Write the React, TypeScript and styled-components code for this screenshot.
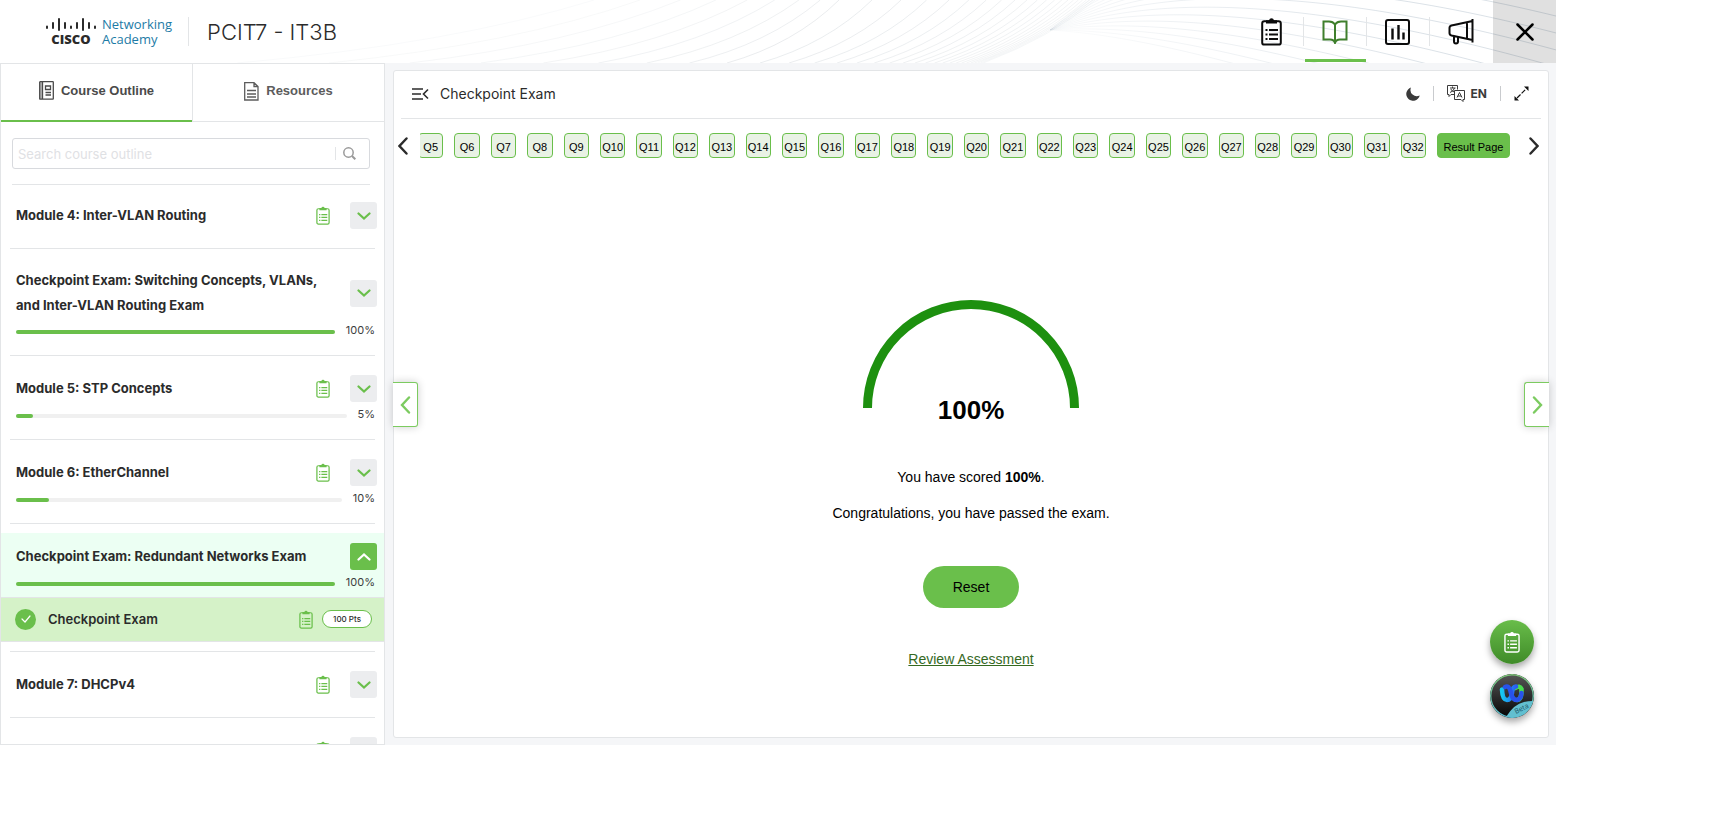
import React from 'react';
import styled, { createGlobalStyle, css } from 'styled-components';

const green = '#6abf4b';
const line = '#e3e5e7';

const GlobalStyle = createGlobalStyle`
  *, *::before, *::after { box-sizing: border-box; }
  body { margin: 0; background: #fff; color: #2b2b2b; font-family: Inter, "Liberation Sans", sans-serif; }
  button { font: inherit; color: inherit; border: 0; padding: 0; background: none; cursor: pointer; }
  h1, h2, h3, p, ul, ol { margin: 0; padding: 0; }
  ul, ol { list-style: none; }
  svg { display: block; flex: none; }
`;

const Page = styled.div`
  min-height: 100vh;
  padding: 0 172px 82px 0;
  display: flex;
`;
const Shell = styled.div`
  flex: 1;
  min-width: 0;
  height: calc(100vh - 82px);
  display: flex;
  flex-direction: column;
`;

/* ---------- header ---------- */
const Header = styled.header`
  position: relative;
  flex: none;
  height: 63px;
  display: flex;
  align-items: center;
  padding-left: 46px;
`;
const Waves = styled.svg`
  position: absolute;
  inset: 0;
  width: 100%;
  height: 100%;
  z-index: -1;
`;
const Brand = styled.a`
  display: flex;
  align-items: center;
  gap: 6px;
  padding-right: 16px;
  border-right: 1px solid ${line};
  height: 29px;
  text-decoration: none;
`;
const CiscoMark = styled.span`
  display: flex;
  flex-direction: column;
  align-items: center;
  gap: 2px;
  color: #2b2b2b;
  font: 800 13px/12px "Open Sans", sans-serif;
`;
const AcademyName = styled.span`
  color: #1d7ba6;
  font: 400 13px/15px "Open Sans", sans-serif;
`;
const CourseTitle = styled.h1`
  flex: 1;
  padding-left: 18px;
  font-size: 22px;
  line-height: 28px;
  font-weight: 300;
`;
const HeaderNav = styled.nav`
  display: flex;
  align-self: stretch;
`;
const NavButton = styled.button<{ $active?: boolean }>`
  position: relative;
  width: 63px;
  padding-right: 2px;
  display: grid;
  place-items: center;
  color: ${(p) => (p.$active ? '#3f7f2c' : '#0c0c0c')};
  background: linear-gradient(${line}, ${line}) right center / 1px 29px no-repeat;
  &:nth-last-child(2) { background: none; }
  ${(p) => p.$active && css`
    &::after { content: ''; position: absolute; inset: auto 1px 1px; height: 3px; background: ${green}; }
  `}
`;
const CloseButton = styled.button`
  width: 63px;
  display: grid;
  place-items: center;
  color: #000;
  background: rgba(0, 0, 0, 0.12);
`;

/* ---------- layout ---------- */
const Body = styled.div`
  flex: 1;
  min-height: 0;
  display: flex;
  background: #f5f6f8;
`;
const Sidebar = styled.aside`
  flex: none;
  width: 385px;
  display: flex;
  flex-direction: column;
  border: 1px solid ${line};
  background: #fff;
  overflow: hidden;
`;
const Tabs = styled.div`
  flex: none;
  display: flex;
  height: 58px;
`;
const Tab = styled.button<{ $active?: boolean }>`
  flex: 1;
  display: flex;
  align-items: center;
  justify-content: center;
  gap: 7px;
  padding-bottom: 3px;
  color: ${(p) => (p.$active ? '#4a4a4a' : '#5c5c5c')};
  font: 700 13px/20px "Liberation Sans", sans-serif;
  border-bottom: ${(p) => (p.$active ? `2px solid ${green}` : `1px solid ${line}`)};
  & + & { border-left: 1px solid ${line}; }
`;
const SearchArea = styled.div`
  flex: none;
  margin: 0 14px 0 11px;
  padding: 16px 0 15px;
  border-bottom: 1px solid ${line};
`;
const SearchBox = styled.label`
  display: flex;
  align-items: center;
  height: 31px;
  padding: 0 13px 0 5px;
  border: 1px solid #d8dade;
  border-radius: 3px;
`;
const SearchInput = styled.input`
  flex: 1;
  min-width: 0;
  border: 0;
  outline: 0;
  padding: 0;
  background: none;
  font: 400 13px/20px Inter, sans-serif;
  &::placeholder { color: #dfe1e4; opacity: 1; }
`;
const SearchButton = styled.button`
  padding-left: 7px;
  border-left: 1px solid ${line};
  color: #9a9a9a;
`;

/* ---------- outline ---------- */
const OutlineList = styled.ul`
  flex: 1;
  min-height: 0;
  overflow: hidden;
`;
const OutlineItem = styled.li`
  padding: 9px 0 10px;
  background: linear-gradient(${line}, ${line}) center bottom / calc(100% - 18px) 1px no-repeat;
  &:first-child { padding-top: 7px; }
`;
const ModuleCard = styled.div<{ $open?: boolean }>`
  padding: 10px 7px 0 15px;
  background: ${(p) => (p.$open ? '#ecfff3' : 'transparent')};
`;
const ModuleHead = styled.div<{ $plain?: boolean }>`
  display: flex;
  align-items: center;
  padding-bottom: ${(p) => (p.$plain ? '10px' : '0')};
`;
const ModuleTitle = styled.h3`
  flex: 1;
  padding-right: 16px;
  font-size: 13px;
  line-height: 25px;
  font-weight: 700;
`;
const TaskIcon = styled.span`
  margin-right: 20px;
  color: ${green};
`;
const Toggle = styled.button<{ $open?: boolean }>`
  flex: none;
  width: 27px;
  height: 27px;
  display: grid;
  place-items: center;
  border-radius: 3px;
  color: ${(p) => (p.$open ? '#fff' : green)};
  background: ${(p) => (p.$open ? green : '#ecedef')};
`;
const ProgressRow = styled.div<{ $open?: boolean }>`
  display: flex;
  align-items: center;
  gap: 11px;
  height: ${(p) => (p.$open ? '27px' : '28px')};
  padding-right: 2px;
  font-size: 11px;
  line-height: 24px;
  color: #3d3d3d;
  span { padding-bottom: 4px; }
`;
const Track = styled.div`
  flex: 1;
  height: 4px;
  border-radius: 2px;
  background: #f0f0f0;
`;
const Fill = styled.div`
  height: 4px;
  border-radius: 2px;
  background: ${green};
`;
const Lesson = styled.div`
  display: flex;
  align-items: center;
  height: 45px;
  padding: 0 12px 1px 14px;
  border: solid ${line};
  border-width: 1px 0;
  background: #d5f2c8;
`;
const Done = styled.span`
  width: 21px;
  height: 21px;
  display: grid;
  place-items: center;
  border-radius: 50%;
  color: #fff;
  background: ${green};
`;
const LessonTitle = styled.a`
  flex: 1;
  padding-left: 12px;
  font-size: 13px;
  line-height: 25px;
  font-weight: 600;
  color: inherit;
  text-decoration: none;
`;
const Points = styled.span`
  width: 50px;
  height: 18px;
  margin-left: 9px;
  border: 1px solid ${green};
  border-radius: 9px;
  background: #fff;
  font-size: 8px;
  line-height: 16px;
  font-weight: 500;
  text-align: center;
`;
const LessonIcon = styled.span`
  color: ${green};
`;

/* ---------- content ---------- */
const Main = styled.main`
  flex: 1;
  min-width: 0;
  padding: 7px 7px 7px 8px;
  display: flex;
`;
const Card = styled.section`
  position: relative;
  flex: 1;
  min-width: 0;
  display: flex;
  flex-direction: column;
  border: 1px solid ${line};
  border-radius: 3px;
  background: #fff;
`;
const CardHead = styled.div`
  display: flex;
  align-items: center;
  height: 48px;
  margin: 0 7px;
  padding: 0 12px 2px 11px;
  border-bottom: 1px solid ${line};
`;
const CardTitle = styled.h2`
  flex: 1;
  padding-left: 11px;
  font-size: 14px;
  line-height: 24px;
  font-weight: 400;
`;
const ToolGroup = styled.div`
  display: flex;
  align-items: center;
  height: 15px;
  & + & { margin-left: 13px; padding-left: 13px; border-left: 1px solid #c9cbce; }
`;
const ToolButton = styled.button`
  display: flex;
  align-items: center;
  gap: 6px;
  font: 700 12px/16px Inter, sans-serif;
  color: #3a3a3a;
`;
const QuestionBar = styled.div`
  display: flex;
  align-items: center;
  gap: 12px;
  margin: 14px 9px 0 4px;
`;
const Viewport = styled.div`
  flex: 1;
  min-width: 0;
  overflow: hidden;
  padding-right: 7px;
`;
const Questions = styled.ol`
  display: flex;
  gap: 11px;
  margin-left: -2px;
`;
const QuestionItem = styled.li<{ $result?: boolean }>`
  flex: ${(p) => (p.$result ? '0 0 73px' : '1 0 24px')};
`;
const QuestionButton = styled.button<{ $result?: boolean }>`
  width: 100%;
  height: 25px;
  padding-top: 2px;
  border: 1px solid ${green};
  border-radius: 4px;
  background: ${(p) => (p.$result ? green : '#e9f2e5')};
  color: #000;
  font: 400 11px/20px "Liberation Sans", sans-serif;
  white-space: nowrap;
`;
const Result = styled.div`
  display: flex;
  flex-direction: column;
  align-items: center;
  padding-top: 142px;
  font-family: "Liberation Sans", sans-serif;
  color: #000;
`;
const Gauge = styled.div`
  display: grid;
  justify-items: center;
  margin-bottom: 42px;
  & > * { grid-area: 1 / 1; }
`;
const Score = styled.strong`
  padding-top: 95px;
  font-size: 26px;
  line-height: 30px;
`;
const Message = styled.p`
  font-size: 14px;
  line-height: 20px;
  margin-bottom: 16px;
`;
const ResetButton = styled.button`
  width: 96px;
  height: 42px;
  margin: 27px 0 41px;
  border-radius: 21px;
  background: ${green};
  font-size: 14px;
`;
const ReviewLink = styled.a`
  color: #35691f;
  font-size: 14px;
  line-height: 20px;
`;
const PageTurn = styled.button<{ $side: 'left' | 'right' }>`
  position: absolute;
  top: 311px;
  ${(p) => p.$side}: -1px;
  width: 25px;
  height: 45px;
  display: grid;
  place-items: center;
  color: #7ccb60;
  background: #fff;
  border: 1px solid #7ccb60;
  border-${(p) => p.$side}: 0;
  border-radius: ${(p) => (p.$side === 'left' ? '0 3px 3px 0' : '3px 0 0 3px')};
  box-shadow: 0 0 8px rgba(0, 0, 0, 0.2);
`;
const Floating = styled.div`
  position: absolute;
  right: 14px;
  bottom: 19px;
  display: grid;
  gap: 10px;
`;
const FloatButton = styled.button<{ $dark?: boolean }>`
  width: 44px;
  height: 44px;
  display: grid;
  place-items: center;
  overflow: hidden;
  border-radius: 50%;
  color: #fff;
  background: ${(p) => (p.$dark ? '#222' : 'linear-gradient(#69bd4a, #3f8b28)')};
  box-shadow: 0 4px 7px rgba(0, 0, 0, 0.35);
`;

/* ---------- drawings ---------- */
const Clipboard = ({ w, h, s = 1.9 }: { w: number; h: number; s?: number }) => (
  <svg width={w} height={h} viewBox="0 0 21 29" fill="none" stroke="currentColor" strokeWidth={s}>
    <rect x="1.2" y="4.2" width="18.6" height="23.4" rx="2.2" />
    <path d="M5 3.2h3a2.6 2.6 0 0 1 5 0h3v3.3H5z" fill="currentColor" stroke="none" />
    <path d="M4.5 13h2M4.5 17.5h2M4.5 22h2M8 13h9M8 17.5h9M8 22h9" />
  </svg>
);
const Chevron = ({ d, w, h, s = 2 }: { d: string; w: number; h: number; s?: number }) => (
  <svg width={w} height={h} viewBox={`0 0 ${w} ${h}`} fill="none" stroke="currentColor" strokeWidth={s} strokeLinecap="round">
    <path d={d} />
  </svg>
);

/* Contour lines: one family bunches up toward x = 1000, the other fans out from there. */
const risingLines = Array.from({ length: 30 }, (_, i) => {
  const start = 1002 - 275 * Math.pow(0.88, i - 8);
  const reach = 112 + Math.max(0, 727 - start) * 0.5;
  return {
    d: `M${start} 63Q${start + reach * 0.6} ${44 - Math.max(0, i - 8) * 0.3} ${start + reach} 0`,
    opacity: i < 8 ? 0.04 + i * 0.012 : 0.15 - (i - 8) * 0.004,
  };
});
const fallingLines = Array.from({ length: 15 }, (_, i) => {
  const k = i - 9;
  return {
    d: `M1050 30C1130 ${10 + 5 * k} 1260 ${-5 + 13 * k} 1560 ${85 + 17 * k}`,
    opacity: 1 - Math.max(0, k) * 0.08,
  };
});

type Item = { title: string; task?: boolean; progress?: number; open?: boolean };
const items: Item[] = [
  { title: 'Module 4: Inter-VLAN Routing', task: true },
  { title: 'Checkpoint Exam: Switching Concepts, VLANs, and Inter-VLAN Routing Exam', progress: 100 },
  { title: 'Module 5: STP Concepts', task: true, progress: 5 },
  { title: 'Module 6: EtherChannel', task: true, progress: 10 },
  { title: 'Checkpoint Exam: Redundant Networks Exam', progress: 100, open: true },
  { title: 'Module 7: DHCPv4', task: true },
  { title: '', task: true },
];
const questions = Array.from({ length: 28 }, (_, i) => `Q${i + 5}`);

export default function App() {
  return (
    <Page>
      <GlobalStyle />
      <Shell>
        <Header>
          <Waves viewBox="0 0 1556 63" preserveAspectRatio="xMaxYMid slice" fill="none" aria-hidden="true">
            <defs>
              <linearGradient id="fan" gradientUnits="userSpaceOnUse" x1="1045" y1="0" x2="1400" y2="0">
                <stop stopColor="#8fa3b5" stopOpacity="0.04" />
                <stop offset="0.35" stopColor="#8fa3b5" stopOpacity="0.16" />
                <stop offset="1" stopColor="#8fa3b5" stopOpacity="0.32" />
              </linearGradient>
            </defs>
            {risingLines.map((l, i) => (
              <path key={i} d={l.d} stroke="#70808f" strokeOpacity={l.opacity} />
            ))}
            {fallingLines.map((l, i) => (
              <path key={i} d={l.d} stroke="url(#fan)" strokeOpacity={l.opacity} />
            ))}
          </Waves>
          <Brand href="#" aria-label="Cisco Networking Academy">
            <CiscoMark>
              <svg width="50" height="13" viewBox="0 0 50 13" stroke="currentColor" strokeWidth="2" strokeLinecap="round">
                <path d="M1 8.500v1.500M7 5v5M13 1v11M19 5v5M25 8.500v1.500M31 5v5M37 1v11M43 5v5M49 8.500v1.500" />
              </svg>
              CISCO
            </CiscoMark>
            <AcademyName>Networking<br />Academy</AcademyName>
          </Brand>
          <CourseTitle>PCIT7 - IT3B</CourseTitle>
          <HeaderNav aria-label="Course">
            <NavButton aria-label="Assignments"><Clipboard w={21} h={29} s={2} /></NavButton>
            <NavButton $active aria-label="Course content">
              <svg width="26" height="24" viewBox="0 0 26 24" fill="none" stroke="currentColor" strokeWidth="2">
                <path d="M13 4.500Q11 1.500 7 1.500H1.500V19.500H8Q12 19.500 13 23Q14 19.500 18 19.500H24.500V1.500H19Q15 1.500 13 4.500V22" />
              </svg>
            </NavButton>
            <NavButton aria-label="Grades">
              <svg width="25" height="26" viewBox="0 0 25 26" fill="none" stroke="currentColor" strokeWidth="2">
                <rect x="1" y="1" width="23" height="24" rx="2" />
                <path d="M7.500 9.500V20.500M13.500 6V20.500M18.500 13.500V20.500" strokeWidth="2.400" />
              </svg>
            </NavButton>
            <NavButton aria-label="Announcements">
              <svg width="26" height="27" viewBox="0 0 26 27" fill="none" stroke="currentColor" strokeWidth="2">
                <path d="M24.500 1V24.500M19 4V21M24.500 3L3.500 7.500Q1.500 8 1.500 10V15Q1.500 17 3.500 17.500L24.500 22M6 18V23.500Q6 25.500 8 25.500T10 23.500V19" />
              </svg>
            </NavButton>
            <CloseButton aria-label="Close"><Chevron w={18} h={18} d="M1.500 1.500L16.500 16.500M16.500 1.500L1.500 16.500" s={2.5} /></CloseButton>
          </HeaderNav>
        </Header>

        <Body>
          <Sidebar>
            <Tabs role="tablist">
              <Tab $active role="tab" aria-selected="true">
                <svg width="15" height="19" viewBox="0 0 15 19" fill="none" stroke="currentColor" strokeWidth="1.300">
                  <path d="M0.700 0.700H3.700V18.200H0.700z" fill="#bbb" stroke="none" />
                  <rect x="0.700" y="0.700" width="13.600" height="17.500" rx="0.500" />
                  <path d="M3.500 1V18M6.500 5H11.500V8.500H6.500zM6.500 11.500H12M6.500 14H12" />
                </svg>
                Course Outline
              </Tab>
              <Tab role="tab" aria-selected="false">
                <svg width="15" height="19" viewBox="0 0 15 19" fill="none" stroke="currentColor" strokeWidth="1.300">
                  <path d="M0.700 0.700H10L14 4.500V18H0.700zM10 0.700V4.500H14M3 8.500H12M3 12H12M3 15H12" />
                </svg>
                Resources
              </Tab>
            </Tabs>
            <SearchArea>
              <SearchBox>
                <SearchInput type="search" placeholder="Search course outline" aria-label="Search course outline" />
                <SearchButton aria-label="Search">
                  <svg width="13" height="13" viewBox="0 0 13 13" fill="none" stroke="currentColor" strokeWidth="1.500">
                    <circle cx="5.500" cy="5.500" r="4.700" /><path d="M9 9L12.300 12.300" strokeWidth="2" />
                  </svg>
                </SearchButton>
              </SearchBox>
            </SearchArea>
            <OutlineList>
              {items.map((it, i) => (
                <OutlineItem key={i}>
                  <ModuleCard $open={it.open}>
                    <ModuleHead $plain={it.progress === undefined}>
                      <ModuleTitle>{it.title}</ModuleTitle>
                      {it.task && <TaskIcon><Clipboard w={14} h={19} /></TaskIcon>}
                      <Toggle $open={it.open} aria-label={it.open ? 'Collapse' : 'Expand'} aria-expanded={!!it.open}>
                        <Chevron w={14} h={8} s={2.2} d={it.open ? 'M1.500 6.500L7 1.500L12.500 6.500' : 'M1.500 1.500L7 6.500L12.500 1.500'} />
                      </Toggle>
                    </ModuleHead>
                    {it.progress !== undefined && (
                      <ProgressRow $open={it.open}>
                        <Track><Fill style={{ width: `${it.progress}%` }} /></Track>
                        <span>{it.progress}%</span>
                      </ProgressRow>
                    )}
                  </ModuleCard>
                  {it.open && (
                    <Lesson>
                      <Done><Chevron w={10} h={8} d="M1 4L4 7L9 1" s={1.2} /></Done>
                      <LessonTitle href="#">Checkpoint Exam</LessonTitle>
                      <LessonIcon><Clipboard w={14} h={19} /></LessonIcon>
                      <Points>100 Pts</Points>
                    </Lesson>
                  )}
                </OutlineItem>
              ))}
            </OutlineList>
          </Sidebar>

          <Main>
            <Card>
              <CardHead>
                <svg width="17" height="12" viewBox="0 0 17 12" fill="none" stroke="#2b2b2b" strokeWidth="1.600">
                  <path d="M0 1H11M0 6H9M0 11H11M16 1.500L11.500 6L16 10.500" />
                </svg>
                <CardTitle>Checkpoint Exam</CardTitle>
                <ToolGroup>
                  <ToolButton aria-label="Dark mode">
                    <svg width="14" height="14" viewBox="0 0 14 14" fill="currentColor"><path d="M5 0.500A6.800 6.800 0 1 0 13.700 8.500A6.300 6.300 0 0 1 5 0.500z" /></svg>
                  </ToolButton>
                </ToolGroup>
                <ToolGroup>
                  <ToolButton>
                    <svg width="18" height="17" viewBox="0 0 18 17" fill="none" stroke="currentColor" strokeWidth="1">
                      <path d="M7.500 9.500H4L2 11.500V9.500H0.500V0.500H10.500V4.500M7.500 5.500H17.500V14.500H16V16.500L14 14.500H7.500zM3 3H8.500M5.500 1.500V3M7.500 3Q6.500 6.500 3 7.500M3.800 4Q5 6.500 7.300 7M10 12.500L12.500 7.500L15 12.500M11 11H14" />
                    </svg>
                    EN
                  </ToolButton>
                </ToolGroup>
                <ToolGroup>
                  <ToolButton aria-label="Full screen">
                    <svg width="15" height="15" viewBox="0 0 15 15" fill="#111" stroke="#111">
                      <path d="M3 12L12 3" strokeWidth="1.200" strokeDasharray="5 1.500" /><path d="M10 0.500H14.500V5zM0.500 10V14.500H5z" stroke="none" />
                    </svg>
                  </ToolButton>
                </ToolGroup>
              </CardHead>
              <QuestionBar>
                <button aria-label="Previous questions"><Chevron w={10} h={18} d="M8.500 1.500L1.500 9L8.500 16.500" s={2.4} /></button>
                <Viewport>
                  <Questions>
                    {questions.map((q) => (
                      <QuestionItem key={q}><QuestionButton>{q}</QuestionButton></QuestionItem>
                    ))}
                    <QuestionItem $result><QuestionButton $result>Result Page</QuestionButton></QuestionItem>
                  </Questions>
                </Viewport>
                <button aria-label="Next questions"><Chevron w={10} h={18} d="M1.500 1.500L8.500 9L1.500 16.500" s={2.4} /></button>
              </QuestionBar>
              <Result>
                <Gauge>
                  <svg width="216" height="108" viewBox="0 0 216 108" fill="none" aria-hidden="true">
                    <path d="M4.500 108A103.500 103.500 0 0 1 211.500 108" stroke="#1d900f" strokeWidth="9" />
                  </svg>
                  <Score>100%</Score>
                </Gauge>
                <Message>You have scored <b>100%</b>.</Message>
                <Message>Congratulations, you have passed the exam.</Message>
                <ResetButton>Reset</ResetButton>
                <ReviewLink href="#">Review Assessment</ReviewLink>
              </Result>
              <PageTurn $side="left" aria-label="Previous page"><Chevron w={11} h={18} d="M9 1.500L2 9L9 16.500" s={2.4} /></PageTurn>
              <PageTurn $side="right" aria-label="Next page"><Chevron w={11} h={18} d="M2 1.500L9 9L2 16.500" s={2.4} /></PageTurn>
              <Floating>
                <FloatButton aria-label="Tasks"><Clipboard w={16} h={22} /></FloatButton>
                <FloatButton $dark aria-label="Webex assistant, beta">
                  <svg width="44" height="44" viewBox="0 0 44 44" fill="none">
                    <defs>
                      <linearGradient id="disc" x1="0" y1="0" x2="0" y2="1"><stop stopColor="#555" /><stop offset="1" stopColor="#050505" /></linearGradient>
                      <linearGradient id="rim" x1="0" y1="0" x2="0" y2="1"><stop stopColor="#7cc576" /><stop offset="1" stopColor="#5cc0d8" /></linearGradient>
                      <linearGradient id="left" x1="0" y1="0" x2="1" y2="0"><stop stopColor="#16c8f0" /><stop offset="1" stopColor="#2a5cf0" /></linearGradient>
                    </defs>
                    <circle cx="22" cy="22" r="21.300" fill="url(#disc)" stroke="url(#rim)" strokeWidth="1.400" />
                    <path d="M16 43Q24 30 34 28Q38 27 43 27A22 22 0 0 1 16 43z" fill="#62bfd0" />
                    <path d="M25 14Q30 11 31.500 15Q32 26 27 26" stroke="#49dc50" strokeWidth="4.600" strokeLinecap="round" />
                    <path d="M12 15.500Q12.500 26 17 26Q21 26 22 19Q22.500 13 26 12.500" stroke="url(#left)" strokeWidth="4.600" strokeLinecap="round" />
                    <path d="M15 13Q19 11 20.500 17Q22 26 27 26Q31 25 31.500 19" stroke="#2852ea" strokeWidth="4.600" strokeLinecap="round" />
                    <text x="26" y="40" transform="rotate(-27 26 40)" fontFamily="Open Sans, sans-serif" fontSize="7" fill="#1c5666">Beta</text>
                  </svg>
                </FloatButton>
              </Floating>
            </Card>
          </Main>
        </Body>
      </Shell>
    </Page>
  );
}
